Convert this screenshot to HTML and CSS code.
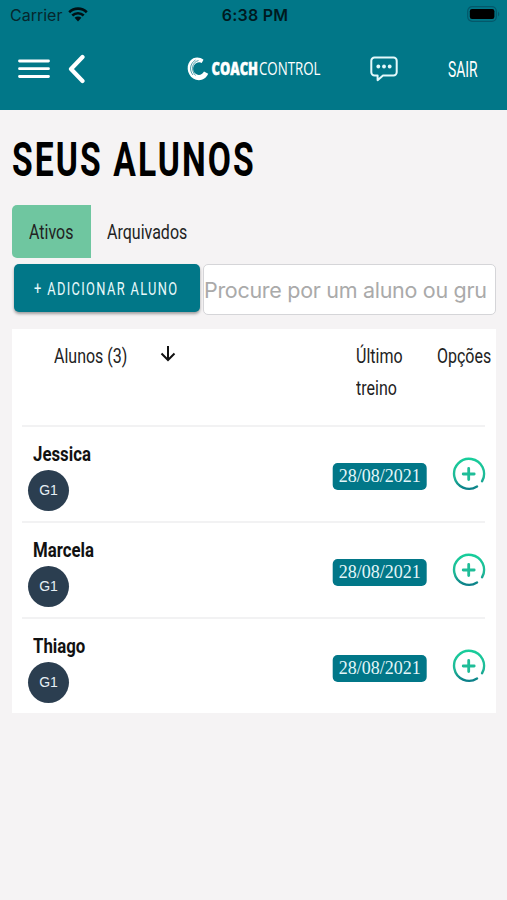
FILE: index.html
```html
<!DOCTYPE html>
<html lang="pt-BR">
<head>
    <meta charset="UTF-8">
    <meta name="viewport" content="width=device-width, initial-scale=1.0">
    <title>Coach Control</title>
    <link rel="stylesheet" href="styles.css">
</head>
<body>
<header class="header">
    <div class="status-bar">
        <div class="carrier">
            <span>Carrier</span>
            <svg width="20" height="15" viewBox="0 0 20 15">
                <path d="M1.2 5.2a12.6 12.6 0 0 1 17.6 0M4.3 8.5a8.2 8.2 0 0 1 11.4 0" fill="none" stroke="#001014" stroke-width="2.6"/>
                <path d="M6.6 10.8a4.9 4.9 0 0 1 6.8 0L10 14.4z" fill="#001014"/>
            </svg>
        </div>
        <div class="clock">6:38 PM</div>
        <svg class="battery" width="33" height="17" viewBox="0 0 33 17">
            <rect x="0.7" y="0.7" width="28.6" height="14.6" rx="4.5" fill="none" stroke="#04586a" stroke-width="1.2"/>
            <rect x="2.8" y="3" width="24.6" height="10" rx="2.2" fill="#000"/>
            <path d="M31 5.7c1.6.6 1.6 4 0 4.6z" fill="#04586a"/>
        </svg>
    </div>
    <nav class="navbar">
        <svg class="menu" width="32" height="20" viewBox="0 0 32 20">
            <path d="M1.5 2h29M1.5 9.7h29M1.5 17.5h29" stroke="#fff" stroke-width="2.8" stroke-linecap="round"/>
        </svg>
        <svg class="back" width="18" height="30" viewBox="0 0 18 30">
            <path d="M15.500 3L4 15l11.500 12" fill="none" stroke="#fff" stroke-width="4.2" stroke-linecap="round" stroke-linejoin="round"/>
        </svg>
        <svg class="logo" width="136" height="26" viewBox="0 0 136 26">
            <path d="M16.500 3.800C12.500.600 6.500.700 3 5c-4.800 5.800-2 16.500 6 18.800 4.800 1.400 9.800-.6 12.200-6l-4.200-2.300c-1.800 3.200-4.800 4.200-7.500 2.800C5 16 5 9.500 9.500 7c1.700-1 3.700-1 5.200.1z" fill="#fff"/>
            <path d="M11.500 4.500C5 6 3.500 14 8.500 19.500M8.500 4C3 7.500 2 14 6 19" fill="none" stroke="#017788" stroke-width="0.7"/>
            <text class="logo-bold" x="24.500" y="18.500" textLength="46.500" lengthAdjust="spacingAndGlyphs">COACH</text>
            <text class="logo-light" x="72" y="18.500" textLength="61.500" lengthAdjust="spacingAndGlyphs">CONTROL</text>
        </svg>
        <svg class="chat" width="28" height="26" viewBox="0 0 28 26">
            <path d="M4.500 1.500h19a3.200 3.200 0 0 1 3.200 3.200v11.600a3.200 3.200 0 0 1-3.200 3.200H13l-5.400 4.700v-4.700H4.500a3.200 3.200 0 0 1-3.200-3.200V4.700a3.200 3.200 0 0 1 3.200-3.200z" fill="none" stroke="#e4f9fb" stroke-width="2" stroke-linejoin="round"/>
            <g fill="#e4f9fb">
                <circle cx="8.300" cy="10.500" r="1.900"/>
                <circle cx="14" cy="10.500" r="1.900"/>
                <circle cx="19.700" cy="10.500" r="1.900"/>
            </g>
        </svg>
        <a class="logout">SAIR</a>
    </nav>
</header>

<main class="content">
    <h1 class="title"><span>SEUS ALUNOS</span></h1>

    <div class="tabs">
        <div class="tab active"><span class="narrow">Ativos</span></div>
        <div class="tab"><span class="narrow">Arquivados</span></div>
    </div>

    <div class="toolbar">
        <button class="add-button"><span>+ ADICIONAR ALUNO</span></button>
        <div class="search">Procure por um aluno ou gru</div>
    </div>

    <section class="students">
        <div class="table-head">
            <div class="col-name">
                <span class="narrow">Alunos (3)</span>
                <svg class="sort" width="16" height="17" viewBox="0 0 16 17">
                    <path d="M8 1v14M1.500 8.500L8 15l6.500-6.500" fill="none" stroke="#111" stroke-width="2"/>
                </svg>
            </div>
            <div class="col-date"><span class="narrow">Último<br>treino</span></div>
            <div class="col-options"><span class="narrow">Opções</span></div>
        </div>

        <div class="student">
            <div class="person">
                <div class="name"><span>Jessica</span></div>
                <div class="group">G1</div>
            </div>
            <div class="date">28/08/2021</div>
            <svg class="plus" width="34" height="34" viewBox="0 0 34 34">
                <defs>
                    <linearGradient id="ring" x1="0" y1="0" x2="0" y2="34" gradientUnits="userSpaceOnUse">
                        <stop offset="0" stop-color="#17cf9b"/>
                        <stop offset="0.600" stop-color="#1fb897"/>
                        <stop offset="1" stop-color="#087586"/>
                    </linearGradient>
                </defs>
                <path d="M30.400 24.200A15 15 0 1 0 25.300 29.500" fill="none" stroke="url(#ring)" stroke-width="2.400" stroke-linecap="round"/>
                <path d="M17 11.500v11M11.500 17h11" stroke="#1fbd98" stroke-width="2.800" stroke-linecap="round"/>
            </svg>
        </div>

        <div class="student">
            <div class="person">
                <div class="name"><span>Marcela</span></div>
                <div class="group">G1</div>
            </div>
            <div class="date">28/08/2021</div>
            <svg class="plus" width="34" height="34" viewBox="0 0 34 34">
                <path d="M30.400 24.200A15 15 0 1 0 25.300 29.500" fill="none" stroke="url(#ring)" stroke-width="2.400" stroke-linecap="round"/>
                <path d="M17 11.500v11M11.500 17h11" stroke="#1fbd98" stroke-width="2.800" stroke-linecap="round"/>
            </svg>
        </div>

        <div class="student">
            <div class="person">
                <div class="name"><span>Thiago</span></div>
                <div class="group">G1</div>
            </div>
            <div class="date">28/08/2021</div>
            <svg class="plus" width="34" height="34" viewBox="0 0 34 34">
                <path d="M30.400 24.200A15 15 0 1 0 25.300 29.500" fill="none" stroke="url(#ring)" stroke-width="2.400" stroke-linecap="round"/>
                <path d="M17 11.500v11M11.500 17h11" stroke="#1fbd98" stroke-width="2.800" stroke-linecap="round"/>
            </svg>
        </div>
    </section>
</main>
</body>
</html>
```

FILE: styles.css
```css
* {
    box-sizing: border-box;
}
body {
    margin: 0;
    min-height: 100vh;
    background-color: #f5f3f4;
    font-family: Roboto, "Liberation Sans", sans-serif;
    color: #222;
}
svg {
    display: block;
    flex: none;
}
.header {
    height: 110px;
    background-color: #017788;
}
.status-bar {
    display: grid;
    grid-template-columns: 1fr auto 1fr;
    align-items: center;
    height: 29px;
    padding: 0 7px 0 10px;
    font-family: Inter, sans-serif;
    font-size: 16px;
    color: #06272d;
}
.carrier {
    display: flex;
    align-items: center;
    gap: 6px;
}
.clock {
    font-weight: 600;
    letter-spacing: 0.2px;
    color: #001a1f;
}
.battery {
    justify-self: end;
}
.navbar {
    display: flex;
    align-items: center;
    height: 80px;
    padding-left: 18px;
}
.back {
    margin-left: 17px;
}
.logo {
    margin-left: 102px;
    overflow: visible;
}
.logo-bold,
.logo-light {
    font-family: "Open Sans", sans-serif;
    font-size: 18px;
    font-weight: 800;
    fill: #fff;
}
.logo-bold {
    stroke: #fff;
    stroke-width: 0.5px;
}
.logo-light {
    font-weight: 400;
}
.chat {
    margin-left: 47px;
}
.logout {
    margin-left: 50px;
    font-size: 22px;
    font-weight: 400;
    color: #fff;
    transform: scaleX(0.63);
    transform-origin: left;
}
.content {
    padding: 0 11px 0 12px;
}

/* condensed look for the headings and labels */
.narrow,
.title span,
.name span,
.add-button span {
    display: inline-block;
    white-space: nowrap;
    transform-origin: left;
}
.narrow {
    transform: scaleX(0.762);
}
.title {
    height: 95px;
    margin: 0;
    padding-top: 20px;
    font-size: 48px;
    font-weight: 700;
    line-height: 60px;
    letter-spacing: 3px;
    color: #000;
}
.title span {
    transform: scaleX(0.7);
}
.tabs {
    display: flex;
    height: 53px;
}
.tab {
    width: 79px;
    padding-left: 17px;
    font-size: 21px;
    line-height: 54px;
}
.tab.active {
    background-color: #6fc6a0;
    border-radius: 5px 0 0 5px;
}
.tab + .tab {
    padding-left: 16px;
}
.toolbar {
    display: flex;
    gap: 3px;
    height: 71px;
    padding: 6px 0 0 2px;
}
.add-button {
    flex: none;
    width: 186px;
    height: 48px;
    padding: 0 0 0 20px;
    border: none;
    border-radius: 5px;
    background-color: #017788;
    box-shadow: 0 2px 3px rgba(0, 0, 0, 0.35);
    font-family: inherit;
    font-size: 19px;
    letter-spacing: 2px;
    text-align: left;
    color: #e9fafb;
}
.add-button span {
    transform: scaleX(0.676);
}
.search {
    flex: 1;
    height: 51px;
    border: 1px solid #d5d5d8;
    border-radius: 5px;
    background-color: #fff;
    font-family: Inter, sans-serif;
    font-size: 21.5px;
    letter-spacing: -0.3px;
    line-height: 50px;
    white-space: nowrap;
    color: #aaa;
}
.students {
    height: 384px;
    padding: 0 11px 0 10px;
    background-color: #fff;
}
.table-head {
    display: grid;
    grid-template-columns: 334px 81px 48px;
    height: 98px;
    padding-top: 11px;
    border-bottom: 2px solid #f2f2f3;
    font-size: 21px;
    line-height: 32px;
}
.col-name {
    display: flex;
    padding-left: 32px;
}
.col-name .narrow {
    width: 106px;
}
.sort {
    margin-top: 5px;
}
.student {
    display: flex;
    height: 96px;
    border-bottom: 2px solid #f2f2f3;
}
.student:last-child {
    border-bottom: none;
}
.person {
    width: 311px;
    padding: 12px 0 0 6px;
}
.name {
    height: 31px;
    padding-left: 5px;
    font-size: 21px;
    font-weight: 700;
    line-height: 31px;
    color: #111;
}
.name span {
    transform: scaleX(0.8);
}
.group {
    width: 41px;
    height: 41px;
    border-radius: 50%;
    background-color: #2b3e50;
    font-family: "Liberation Sans", sans-serif;
    font-size: 14px;
    line-height: 40px;
    text-align: center;
    color: #e6eef5;
}
.date {
    width: 94px;
    height: 27px;
    margin-top: 36px;
    border-radius: 5px;
    background-color: #017788;
    font-family: "Liberation Serif", serif;
    font-size: 18px;
    line-height: 27px;
    text-align: center;
    color: #e4f6f8;
}
.plus {
    margin: 30px 0 0 25px;
}
.date,
.plus {
    translate: 0.7px 0;
}
```
